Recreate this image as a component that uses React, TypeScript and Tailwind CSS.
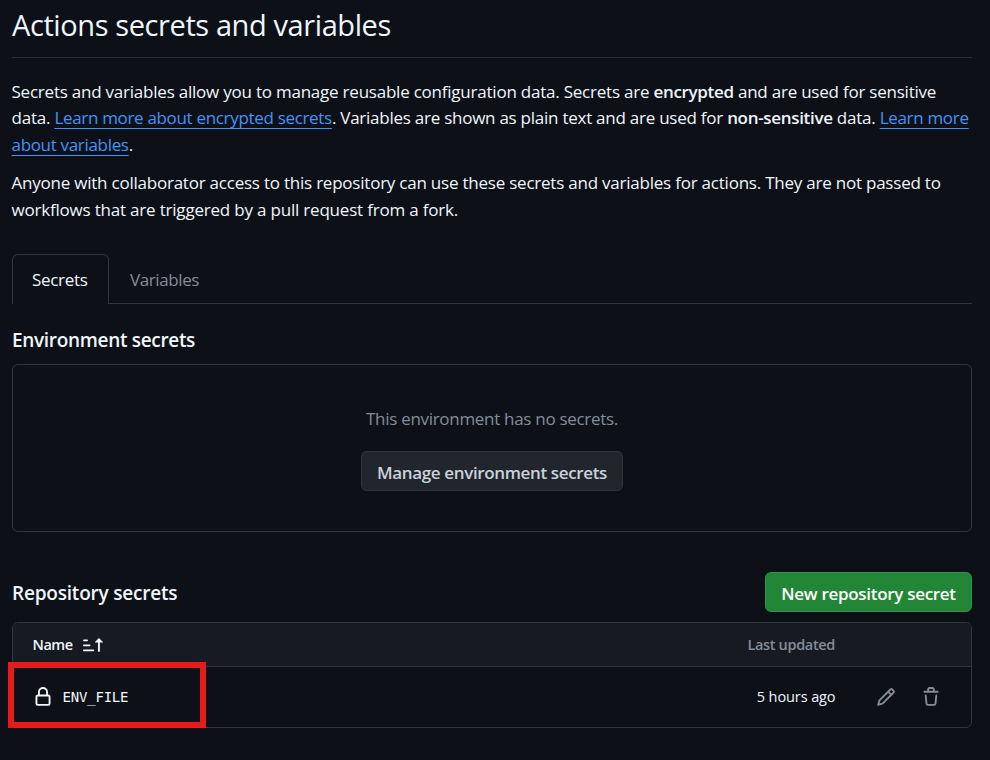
import type { ReactNode } from "react";

function Icon({ d, className = "" }: { d: string; className?: string }) {
  return (
    <svg viewBox="0 0 16 16" className={`h-5 w-5 shrink-0 fill-current ${className}`} aria-hidden="true">
      <path d={d} />
    </svg>
  );
}

const LOCK =
  "M4 4a4 4 0 0 1 8 0v2h.25c.966 0 1.75.784 1.75 1.75v5.5A1.75 1.75 0 0 1 12.25 15h-8.5A1.75 1.75 0 0 1 2 13.25v-5.5C2 6.784 2.784 6 3.75 6H4Zm8.25 3.5h-8.5a.25.25 0 0 0-.25.25v5.5c0 .138.112.25.25.25h8.5a.25.25 0 0 0 .25-.25v-5.5a.25.25 0 0 0-.25-.25ZM10.5 6V4a2.5 2.5 0 1 0-5 0v2Z";
const PENCIL =
  "M11.013 1.427a1.75 1.75 0 0 1 2.474 0l1.086 1.086a1.75 1.75 0 0 1 0 2.474l-8.61 8.61c-.21.21-.47.364-.756.445l-3.251.93a.75.75 0 0 1-.927-.928l.929-3.25c.081-.286.235-.547.445-.758l8.61-8.61Zm.176 4.823L9.75 4.81l-6.286 6.287a.253.253 0 0 0-.064.108l-.558 1.953 1.953-.558a.253.253 0 0 0 .108-.064Zm1.238-3.763a.25.25 0 0 0-.354 0L10.811 3.75l1.439 1.44 1.263-1.263a.25.25 0 0 0 0-.354Z";
const TRASH =
  "M11 1.75V3h2.25a.75.75 0 0 1 0 1.5H2.75a.75.75 0 0 1 0-1.5H5V1.75C5 .784 5.784 0 6.75 0h2.5C10.216 0 11 .784 11 1.75ZM4.496 6.675l.66 6.6a.25.25 0 0 0 .249.225h5.19a.25.25 0 0 0 .249-.225l.66-6.6a.75.75 0 0 1 1.492.149l-.66 6.6A1.748 1.748 0 0 1 10.595 15h-5.19a1.75 1.75 0 0 1-1.741-1.575l-.66-6.6a.75.75 0 1 1 1.492-.15ZM6.5 1.75V3h3V1.75a.25.25 0 0 0-.25-.25h-2.5a.25.25 0 0 0-.25.25Z";
const SORT_ASC =
  "m12.927 2.573 3 3A.25.25 0 0 1 15.75 6H13.5v6.75a.75.75 0 0 1-1.5 0V6H9.75a.25.25 0 0 1-.177-.427l3-3a.25.25 0 0 1 .354 0ZM0 12.25a.75.75 0 0 1 .75-.75h7.5a.75.75 0 0 1 0 1.5H.75a.75.75 0 0 1-.75-.75Zm0-4a.75.75 0 0 1 .75-.75h4.5a.75.75 0 0 1 0 1.5H.75A.75.75 0 0 1 0 8.25Zm0-4a.75.75 0 0 1 .75-.75h2.5a.75.75 0 0 1 0 1.5H.75A.75.75 0 0 1 0 4.25Z";

function Link({ children }: { children: ReactNode }) {
  return (
    <a
      href="#"
      className="tracking-[-0.32px] text-[#4493f8] underline decoration-1 underline-offset-4 [text-decoration-skip-ink:none]"
    >
      {children}
    </a>
  );
}

function Strong({ children }: { children: ReactNode }) {
  return <strong className="font-semibold tracking-[-0.32px]">{children}</strong>;
}

export default function App() {
  return (
    <main className="h-[760px] w-[990px] overflow-hidden bg-[#0d1117] pr-[18px] pl-3 font-['Open_Sans',sans-serif] text-[17px] leading-[26.5px] text-[#f0f6fc]">
      <h1 className="h-[58px] border-b border-[#262c35] pt-[5px] text-[29px] leading-[40px] tracking-[-0.4px]">
        Actions secrets and variables
      </h1>

      <div className="mt-5 -ml-[0.5px] h-[145px] tracking-[-0.225px] whitespace-nowrap">
        <p className="pt-[0.8px]">
          Secrets and variables allow you to manage reusable configuration data. Secrets are <Strong>encrypted</Strong>{" "}
          and are used for sensitive
          <br />
          data. <Link>Learn more about encrypted secrets</Link>
          <span className="tracking-[-0.25px]">. Variables are shown as plain text and are used for </span>
          <Strong>non-sensitive</Strong> data. <Link>Learn more</Link>
          <br />
          <Link>about variables</Link>.
        </p>
        <p className="mt-[12px]">
          Anyone with collaborator access to this repository can use these secrets and variables for actions. They are
          not passed to
          <br />
          <span className="tracking-[-0.2px]">workflows that are triggered by a pull request from a fork.</span>
        </p>
      </div>

      <nav className="mt-[31px] flex h-[50px] tracking-[-0.3px]">
        <a
          href="#"
          className="flex w-[97px] items-center rounded-t-md border border-b-0 border-[#30363d] pt-px pl-[19px]"
        >
          Secrets
        </a>
        <a
          href="#"
          className="flex grow items-center border-b border-[#30363d] pt-[3px] pl-[21px] tracking-[-0.4px] text-[#848d97]"
        >
          Variables
        </a>
      </nav>

      <h2 className="mt-[22px] text-[19px] leading-7 font-semibold tracking-[-0.32px]">Environment secrets</h2>
      <section className="mt-[10px] flex h-[168px] flex-col items-center rounded-md border border-[#30363d] pt-[41px]">
        <p className="tracking-[-0.3px] text-[#848d97]">This environment has no secrets.</p>
        <button className="mt-[18.5px] h-10 w-[262px] rounded-md border border-[#30363d] bg-[#21262d] pt-[4px] font-semibold tracking-[-0.36px] text-[#c9d1d9]">
          Manage environment secrets
        </button>
      </section>

      <header className="mt-10 flex h-10 items-center justify-between">
        <h2 className="pt-[2px] text-[19px] leading-7 font-semibold tracking-[-0.2px]">Repository secrets</h2>
        <button className="h-10 w-[207px] rounded-md border border-[#37914a] bg-[#238636] pt-[4px] font-semibold tracking-[-0.3px] text-white">
          New repository secret
        </button>
      </header>

      <section className="relative mt-[10px] h-[106px] rounded-md border border-[#30363d] text-[14.5px]">
        <div className="flex h-11 items-center rounded-t-[5px] border-b border-[#30363d] bg-[#161b22] pr-[136px] pl-[19.5px]">
          <span className="w-[50.5px] pt-px font-semibold tracking-[-0.45px]">Name</span>
          <Icon d={SORT_ASC} />
          <span className="ml-auto pt-px font-semibold tracking-[-0.34px] text-[#848d97]">Last updated</span>
        </div>
        <div className="flex h-[60px] items-center pr-[30px] pl-5">
          <Icon d={LOCK} className="-mt-px" />
          <span className="ml-[9.5px] pt-px font-['DejaVu_Sans_Mono',monospace] text-[14px] tracking-[-0.2px]">
            ENV_FILE
          </span>
          <span className="ml-auto pt-px tracking-[-0.1px]">5 hours ago</span>
          <Icon d={PENCIL} className="ml-[40.5px] text-[#848d97]" />
          <Icon d={TRASH} className="ml-[25px] text-[#848d97]" />
        </div>
        <div className="absolute top-[39px] -left-[5px] h-[66px] w-[198px] border-[6px] border-[#e51c1b]" />
      </section>
    </main>
  );
}
